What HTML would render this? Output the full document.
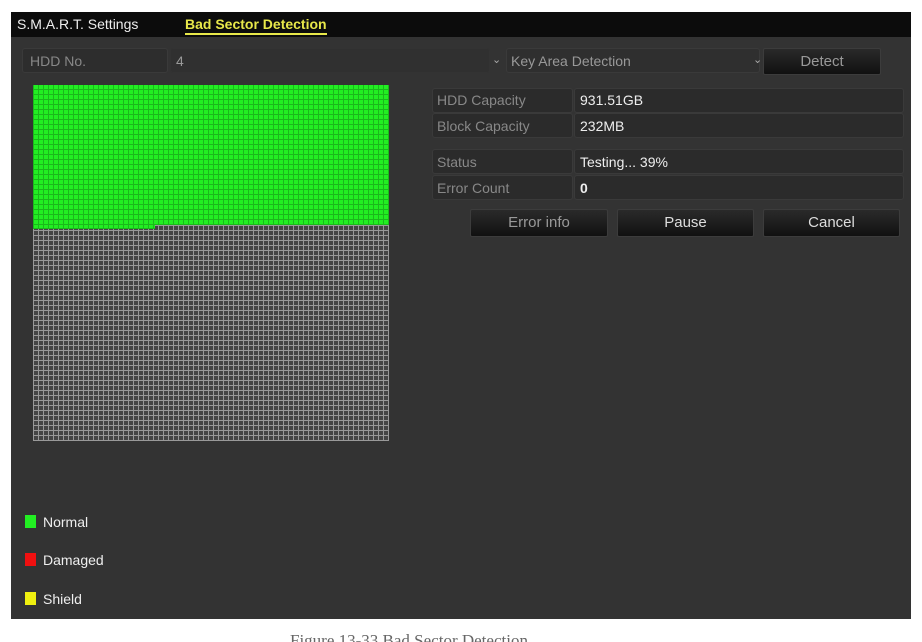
<!DOCTYPE html><html><head><style>
html,body{margin:0;width:922px;height:642px;background:#fff;position:relative;overflow:hidden;font-family:"Liberation Sans",Arial,sans-serif}
.p{position:absolute;left:11px;top:12px;width:900px;height:607px;background:#333}
.top{position:absolute;left:11px;top:12px;width:900px;height:25px;background:#0c0c0c}
.a{position:absolute}
.t{position:absolute;font-size:14px;white-space:nowrap}
.cell{position:absolute;background:#2b2b2b;border:1px solid #3a3a3a;border-radius:3px;box-sizing:border-box}
.btn{position:absolute;background:linear-gradient(#2a2a2a,#111);border:1px solid #3c3c3c;border-radius:2px;box-sizing:border-box;color:#ddd;font-size:15px;text-align:center;line-height:26px}
.g{background-color:#444;background-image:repeating-linear-gradient(90deg,#999 0 1px,transparent 1px 5px),repeating-linear-gradient(0deg,#999 0 1px,transparent 1px 5px)}
.gr{background-color:#22ee22;background-image:repeating-linear-gradient(90deg,#1bb81b 0 1px,transparent 1px 5px),repeating-linear-gradient(0deg,#1bb81b 0 1px,transparent 1px 5px)}
.sq{position:absolute;left:25px;width:11px;height:13px}
</style></head><body>
<div class="p"></div><div class="top"></div>
<div class="t" style="left:17px;top:16px;color:#eee;font-size:14px">S.M.A.R.T. Settings</div>
<div class="t" style="left:185px;top:16px;color:#e8e84a;font-size:14px;font-weight:bold;border-bottom:2px solid #e8e84a;line-height:17px">Bad Sector Detection</div>
<div class="cell" style="left:22px;top:48px;width:146px;height:25px;background:#2d2d2d"></div>
<div class="cell" style="left:170px;top:48px;width:320px;height:25px;background:#303030;border-color:#333"></div>
<div class="t" style="left:30px;top:53px;color:#888">HDD No.</div>
<div class="t" style="left:176px;top:53px;color:#999">4</div>
<div class="cell" style="left:506px;top:48px;width:254px;height:25px;background:#2f2f2f"></div>
<div class="t" style="left:492px;top:53px;color:#aaa;font-size:11px">⌄</div>
<div class="t" style="left:511px;top:53px;color:#999">Key Area Detection</div>
<div class="t" style="left:753px;top:53px;color:#aaa;font-size:11px">⌄</div>
<div class="btn" style="left:763px;top:48px;width:118px;height:27px;color:#999">Detect</div>
<div class="a gr" style="left:33px;top:85px;width:356px;height:140px"></div>
<div class="a g" style="left:33px;top:225px;width:356px;height:216px"></div>
<div class="a gr" style="left:33px;top:225px;width:122px;height:4px"></div>
<div class="cell" style="left:432px;top:88px;width:141px;height:25px"></div><div class="cell" style="left:574px;top:88px;width:330px;height:25px"></div>
<div class="cell" style="left:432px;top:113px;width:141px;height:25px"></div><div class="cell" style="left:574px;top:113px;width:330px;height:25px"></div>
<div class="cell" style="left:432px;top:149px;width:141px;height:25px"></div><div class="cell" style="left:574px;top:149px;width:330px;height:25px"></div>
<div class="cell" style="left:432px;top:175px;width:141px;height:25px"></div><div class="cell" style="left:574px;top:175px;width:330px;height:25px"></div>
<div class="t" style="left:437px;top:92px;color:#888">HDD Capacity</div><div class="t" style="left:580px;top:92px;color:#eee">931.51GB</div>
<div class="t" style="left:437px;top:118px;color:#888">Block Capacity</div><div class="t" style="left:580px;top:118px;color:#eee">232MB</div>
<div class="t" style="left:437px;top:154px;color:#888">Status</div><div class="t" style="left:580px;top:154px;color:#eee">Testing... 39%</div>
<div class="t" style="left:437px;top:180px;color:#888">Error Count</div><div class="t" style="left:580px;top:180px;color:#eee;font-weight:bold">0</div>
<div class="btn" style="left:470px;top:209px;width:138px;height:28px;color:#999">Error info</div>
<div class="btn" style="left:617px;top:209px;width:137px;height:28px">Pause</div>
<div class="btn" style="left:763px;top:209px;width:137px;height:28px">Cancel</div>
<div class="sq" style="top:515px;background:#22ee22"></div><div class="t" style="left:43px;top:514px;color:#eee">Normal</div>
<div class="sq" style="top:553px;background:#f01010"></div><div class="t" style="left:43px;top:552px;color:#eee">Damaged</div>
<div class="sq" style="top:592px;background:#f0f010"></div><div class="t" style="left:43px;top:591px;color:#eee">Shield</div>
<div class="t" style="left:290px;top:631px;color:#666;font-family:'Liberation Serif',serif;font-size:17px">Figure 13-33 Bad Sector Detection</div>
</body></html>
